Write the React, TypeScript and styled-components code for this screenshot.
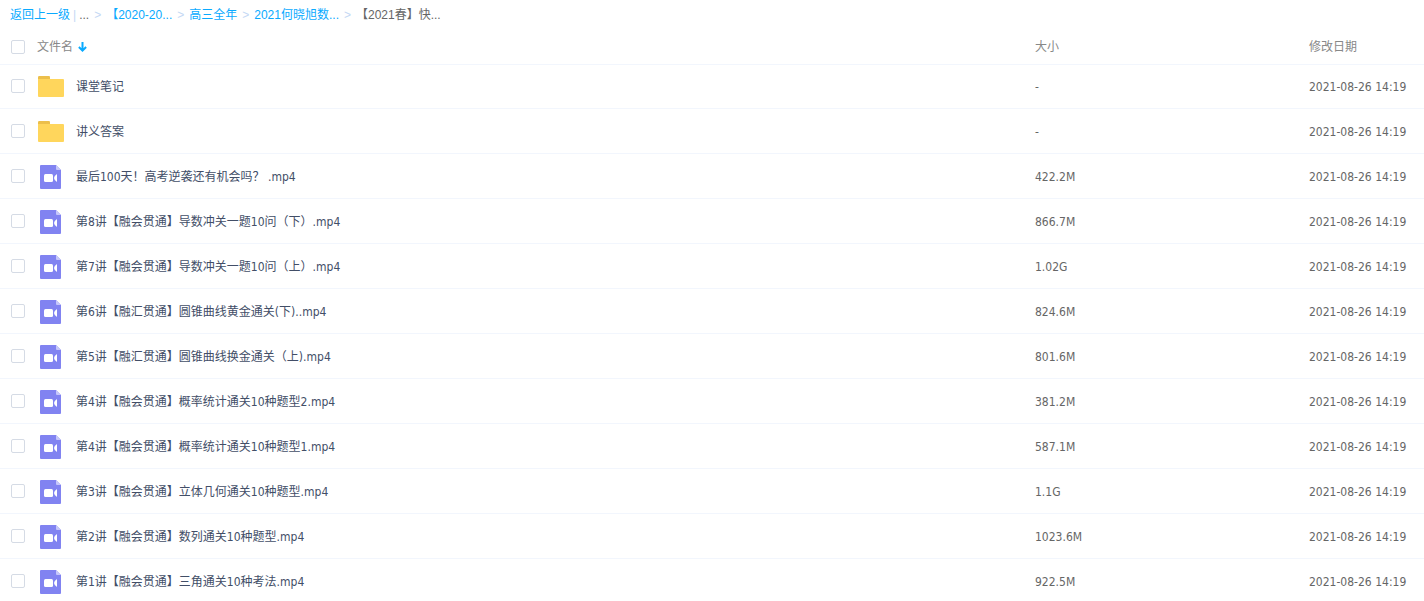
import React from "react";
import styled, { createGlobalStyle } from "styled-components";

const GlobalStyle = createGlobalStyle`
  * { box-sizing: border-box; }
  body {
    margin: 0;
    background: #fff;
    color: #666;
    font: 12px/18px "DejaVu Sans Condensed", "Noto Sans CJK SC", sans-serif;
  }
`;

const Breadcrumb = styled.nav`
  display: flex;
  align-items: center;
  height: 30px;
  padding: 0 10px;
  font-family: "Liberation Sans", "Noto Sans CJK SC", sans-serif;
  white-space: nowrap;
`;

const Crumb = styled.a`
  color: #09aaff;
  text-decoration: none;
`;

const Divider = styled.span`
  margin: 0 3px;
  color: #c4d8f4;
`;

const Chevron = styled.span`
  margin: 0 5px;
  color: #c4d8f4;
`;

const FileTable = styled.table`
  width: 100%;
  border-collapse: separate;
  border-spacing: 0;
  table-layout: fixed;
`;

const HeadCell = styled.th<{ $width?: string }>`
  width: ${(p) => p.$width ?? "auto"};
  height: 35px;
  padding: 0 0 1px;
  border-bottom: 1px solid #f2f6fd;
  color: #888;
  font-weight: 400;
  text-align: left;
`;

const Cell = styled.td`
  height: 45px;
  padding: 0;
  border-bottom: 1px solid #f2f6fd;
  white-space: nowrap;

  tr:first-child > & {
    height: 44px;
    padding-bottom: 1px;
  }
`;

const TextCell = styled(Cell)`
  padding-top: 2px;
`;

const NameLine = styled.div`
  display: flex;
  align-items: center;
  padding-left: 11px;
`;

const Checkbox = styled.input`
  appearance: none;
  flex: none;
  width: 14px;
  height: 14px;
  margin: 0;
  border: 1px solid #d5dbe5;
  border-radius: 2px;
  background: #fff;

  &:checked {
    border-color: #09aaff;
    background: #09aaff;
  }
`;

const SortButton = styled.button`
  display: flex;
  align-items: center;
  gap: 5px;
  margin-left: 12px;
  padding: 0;
  border: 0;
  background: none;
  color: inherit;
  font: inherit;
`;

const IconSlot = styled.span`
  display: flex;
  justify-content: center;
  flex: none;
  width: 26px;
  margin: 0 12px 0 13px;
`;

const FileName = styled.a`
  padding-top: 2px;
  color: #424e67;
  text-decoration: none;
  white-space: pre;
`;

const FolderIcon = () => (
  <svg width="26" height="21" viewBox="0 0 26 21" aria-hidden="true">
    <path d="M0 1.2Q0 0 1.2 0H11Q12 0 12 1.2V6H0Z" fill="#ecbf4b" />
    <path d="M0 3H25Q26 3 26 4V20Q26 21 25 21H1Q0 21 0 20Z" fill="#ffd65c" />
  </svg>
);

const VideoIcon = () => (
  <svg width="22" height="26" viewBox="0 -2 22 26" aria-hidden="true">
    <path d="M1 0H16L21 5V23Q21 24 20 24H1Q0 24 0 23V1Q0 0 1 0Z" fill="#8183f1" />
    <path d="M16 0L21 5H17Q16 5 16 4Z" fill="#c6c7fa" />
    <rect x="4" y="9" width="9" height="8" rx="1.5" fill="#fff" />
    <path d="M17 9V17Q14 15 14 13Q14 11 17 9Z" fill="#fff" />
  </svg>
);

const SortArrow = () => (
  <svg width="9" height="10" viewBox="0 0 9 10" fill="none" stroke="#09aaff" strokeWidth="2" aria-hidden="true">
    <path d="M4.5 0V8.5M0.9 5L4.5 8.6L8.1 5" />
  </svg>
);

type FileEntry = { name: string; size: string; folder?: boolean };

const MODIFIED = "2021-08-26 14:19";

const files: FileEntry[] = [
  { name: "课堂笔记", size: "-", folder: true },
  { name: "讲义答案", size: "-", folder: true },
  { name: "最后100天！高考逆袭还有机会吗？ .mp4", size: "422.2M" },
  { name: "第8讲【融会贯通】导数冲关一题10问（下）.mp4", size: "866.7M" },
  { name: "第7讲【融会贯通】导数冲关一题10问（上）.mp4", size: "1.02G" },
  { name: "第6讲【融汇贯通】圆锥曲线黄金通关(下)..mp4", size: "824.6M" },
  { name: "第5讲【融汇贯通】圆锥曲线换金通关（上).mp4", size: "801.6M" },
  { name: "第4讲【融会贯通】概率统计通关10种题型2.mp4", size: "381.2M" },
  { name: "第4讲【融会贯通】概率统计通关10种题型1.mp4", size: "587.1M" },
  { name: "第3讲【融会贯通】立体几何通关10种题型.mp4", size: "1.1G" },
  { name: "第2讲【融会贯通】数列通关10种题型.mp4", size: "1023.6M" },
  { name: "第1讲【融会贯通】三角通关10种考法.mp4", size: "922.5M" },
];

const parents = ["【2020-20...", "高三全年", "2021何晓旭数..."];

export default function App() {
  return (
    <main lang="zh-CN">
      <GlobalStyle />
      <Breadcrumb>
        <Crumb href="#">返回上一级</Crumb>
        <Divider>|</Divider>
        <span>...</span>
        <Chevron>&gt;</Chevron>
        {parents.map((label) => (
          <React.Fragment key={label}>
            <Crumb href="#">{label}</Crumb>
            <Chevron>&gt;</Chevron>
          </React.Fragment>
        ))}
        <span>【2021春】快...</span>
      </Breadcrumb>
      <FileTable>
        <thead>
          <tr>
            <HeadCell>
              <NameLine>
                <Checkbox type="checkbox" aria-label="全选" />
                <SortButton type="button">
                  文件名
                  <SortArrow />
                </SortButton>
              </NameLine>
            </HeadCell>
            <HeadCell $width="274px">大小</HeadCell>
            <HeadCell $width="115px">修改日期</HeadCell>
          </tr>
        </thead>
        <tbody>
          {files.map((file) => (
            <tr key={file.name}>
              <Cell>
                <NameLine>
                  <Checkbox type="checkbox" aria-label={file.name} />
                  <IconSlot>{file.folder ? <FolderIcon /> : <VideoIcon />}</IconSlot>
                  <FileName href="#">{file.name}</FileName>
                </NameLine>
              </Cell>
              <TextCell>{file.size}</TextCell>
              <TextCell>{MODIFIED}</TextCell>
            </tr>
          ))}
        </tbody>
      </FileTable>
    </main>
  );
}
